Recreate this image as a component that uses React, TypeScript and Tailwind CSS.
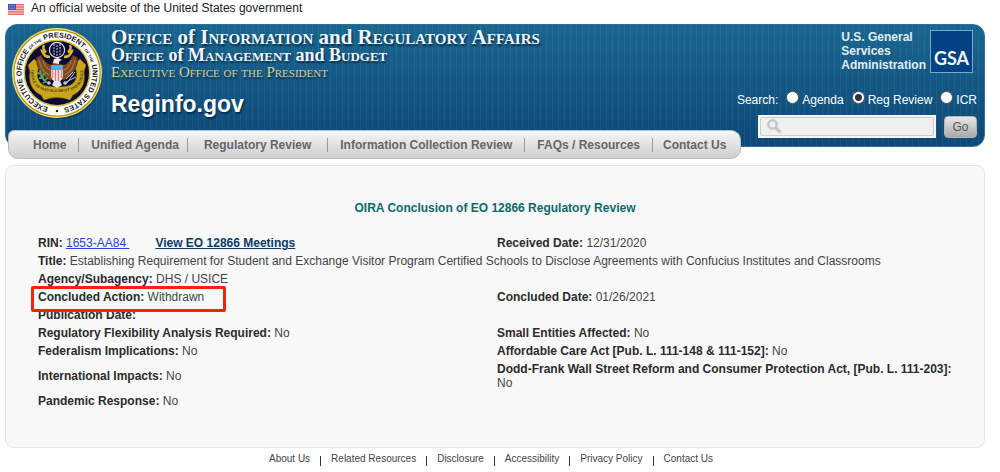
import type { ReactNode } from 'react';

type FieldProps = {
  label: string;
  children?: ReactNode;
};

const NAV_ITEMS = [
  { label: 'Home', className: 'pl-6 pr-3' },
  { label: 'Unified Agenda', className: 'pl-3 pr-2' },
  { label: 'Regulatory Review', className: 'pl-4 pr-4' },
  { label: 'Information Collection Review', className: 'pl-3 pr-3' },
  { label: 'FAQs / Resources', className: 'pl-3 pr-3' },
  { label: 'Contact Us', className: 'pl-2.5 pr-3.5' },
];

const FOOTER_LINKS = [
  'About Us',
  'Related Resources',
  'Disclosure',
  'Accessibility',
  'Privacy Policy',
  'Contact Us',
];

const SCOPES = ['Agenda', 'Reg Review', 'ICR'];

const STRIPES = [0, 2, 4, 6, 8, 10, 12];

function Flag() {
  return (
    <svg width="16" height="11" viewBox="0 0 16 11" aria-hidden="true">
      <rect width="16" height="11" fill="#fbdcd8" />
      {STRIPES.map((n) => (
        <rect key={n} y={(n * 11) / 13} width="16" height="0.9" fill="#e8554d" />
      ))}
      <rect width="8" height="6" fill="#3f5bb8" />
      <path d="M1 1.5h6M1 3h6M1 4.5h6" stroke="#a9b8e8" strokeWidth="0.6" strokeDasharray="0.8 0.8" />
    </svg>
  );
}

function Seal() {
  return (
    <svg width="92" height="92" viewBox="0 0 92 92" className="shrink-0" role="img" aria-label="Executive Office of the President seal">
      <defs>
        <path id="ring" d="M46 81.5a35.5 35.5 0 1 1 0.01 0" />
        <path id="scroll" d="M20 42C19 58 26 65 46 65C66 65 73 58 72 42" />
      </defs>
      <circle cx="47" cy="48" r="44.5" fill="#06294a" opacity="0.5" />
      <circle cx="46" cy="46" r="45" fill="#f4e27c" />
      <circle cx="46" cy="46" r="43.8" fill="#b8920a" />
      <circle cx="46" cy="46" r="42.6" fill="#fff" />
      <circle cx="46" cy="46" r="33.5" fill="#d9bd30" />
      <circle cx="46" cy="46" r="32" fill="#0b0b3b" />
      <text fill="#15151f" fontFamily="Liberation Sans" fontWeight="700" fontSize="7.3">
        <textPath href="#ring" startOffset="4%">
          EXECUTIVE OFFICE <tspan fontSize="4">OF THE</tspan> PRESIDENT <tspan fontSize="4">OF THE</tspan> UNITED STATES
        </textPath>
      </text>
      <circle cx="46" cy="84" r="1.3" fill="#222" />
      {/* ribbon */}
      <path d="M17 38l6-6 7 6-3 5c-2 9 2 15 9 16q10 2 20 0c7-1 11-7 9-16l-3-5 7-6 6 6-2 7c2 13-4 20-11 23l-3 5q-13-5-26 0l-3-5c-7-3-13-10-11-23z" fill="#c9a61c" stroke="#725c08" strokeWidth="0.7" />
      <text fontSize="4" fill="#443806" fontFamily="Liberation Serif" fontWeight="700" textAnchor="middle">
        <textPath href="#scroll" startOffset="50%">OFFICE OF MANAGEMENT AND BUDGET</textPath>
      </text>
      {/* glory */}
      <path d="M33 18q-2 4 2 7l-4-1q2 6 8 6M59 18q2 4-2 7l4-1q-2 6-8 6" fill="none" stroke="#d8b52a" strokeWidth="2.4" />
      <circle cx="46" cy="23" r="7.6" fill="#10103f" stroke="#f0e8c8" strokeWidth="1.1" />
      <g fill="#dedee8">
        {[19, 22, 25, 28].map((y) => (
          <g key={y}>
            <circle cx="43" cy={y - 1} r="0.8" />
            <circle cx="46" cy={y} r="0.8" />
            <circle cx="49" cy={y - 1} r="0.8" />
          </g>
        ))}
      </g>
      {/* eagle */}
      <path d="M41 36q2-4 5-4l4 2-3 2 5 2q6-1 10-10l5 3q-1 15-13 22H38Q26 46 25 31l5-3q4 9 11 10z" fill="#7a4a20" stroke="#3e220d" strokeWidth="0.6" />
      <path d="M28 33q2 11 10 15M32 33q1 7 7 10M64 33q-2 11-10 15M60 33q-1 7-7 10" fill="none" stroke="#b27a3c" strokeWidth="1.2" />
      <path d="M42 36l1-4 4-1 4 2-3 1v3z" fill="#f5f2e8" />
      <path d="M29 43q0 9 8 13M26 46l5 1M28 51l5 0M32 56l3-2M34 46l-3 4M37 51l-4 2" fill="none" stroke="#5da05a" strokeWidth="1.8" />
      <path d="M55 57l9-12M55 55l10-5M55 52l7-7" fill="none" stroke="#c9ccd0" strokeWidth="1" />
      <path d="M40 40h12v9q-1 5-6 7-5-2-6-7z" fill="#fff" />
      <path d="M41.5 43v8M44.5 43v12M47.5 43v12M50.5 43v8" stroke="#ef7076" strokeWidth="1.6" />
      <path d="M40 38h12v5H40z" fill="#48b0e4" />
      <path d="M43 54h6l2 4-5 3-5-3z" fill="#e4e5ed" />
      <circle cx="38" cy="56" r="1.8" fill="#c8cbd6" />
      <circle cx="54" cy="56" r="1.8" fill="#c8cbd6" />
    </svg>
  );
}

function GsaLogo() {
  return (
    <svg width="43" height="43" viewBox="0 0 43 43" className="shrink-0" role="img" aria-label="GSA">
      <rect x="0.5" y="0.5" width="42" height="42" fill="#004282" stroke="#79a9cc" />
      <text x="21.5" y="35" textAnchor="middle" fontSize="18" fontFamily="Lato" fontWeight="700" fill="#f3f7fb">GSA</text>
    </svg>
  );
}

function Small({ children }: { children: ReactNode }) {
  return <span className="[font-variant-caps:normal]">{children}</span>;
}

function Agency() {
  return (
    <div className="pl-2 font-['Liberation_Serif',serif] text-[#f2f6fa] [text-shadow:1px_2px_2px_#06294a]">
      <p className="text-[21px] leading-[20px] font-bold [font-variant-caps:small-caps]">
        Office <Small>of</Small> Information <Small>and</Small> Regulatory Affairs
      </p>
      <p className="text-[18px] leading-[17px] font-bold [font-variant-caps:small-caps]">
        Office <Small>of</Small> Management <Small>and</Small> Budget
      </p>
      <p className="text-[15px] leading-[16px] text-[#dccf96] [font-variant-caps:small-caps]">
        Executive Office of the President
      </p>
      <h1 className="mt-[10px] font-['Liberation_Sans',sans-serif] text-[23px] leading-[28px] font-bold text-white">Reginfo.gov</h1>
    </div>
  );
}

function SearchForm() {
  return (
    <form className="flex flex-col items-end" onSubmit={(e) => e.preventDefault()}>
      <fieldset aria-label="Search scope" className="flex items-center text-[12px] leading-[16px] text-white">
        <span className="mr-2">Search:</span>
        {SCOPES.map((scope) => (
          <label key={scope} className="ml-2 flex items-center gap-[3px] first-of-type:ml-0">
            <input
              type="radio"
              name="scope"
              defaultChecked={scope === 'Reg Review'}
              className="mb-1 size-[13px] appearance-none rounded-full border border-[#555] bg-white checked:bg-[radial-gradient(circle,#333_0_3px,#fff_4px)]"
            />
            {scope}
          </label>
        ))}
      </fieldset>
      <div className="mt-[7px] flex items-center gap-2">
        <label className="flex h-[23px] w-[178px] items-center bg-[#f7f7f7] p-[2px]">
          <span className="flex h-full w-full items-center rounded-[2px] border border-[#ccc] bg-[#f0f0f0] pl-[6px]">
            <svg width="15" height="15" viewBox="0 0 15 15" fill="none" stroke="#c8c8c8" aria-hidden="true">
              <circle cx="5.5" cy="5.5" r="4.2" strokeWidth="2.4" />
              <path d="M8.5 8.5l5 5" strokeWidth="3.2" />
            </svg>
            <input type="text" aria-label="Search terms" className="min-w-0 flex-1 bg-transparent px-1 text-[12px] text-[#333] outline-none" />
          </span>
        </label>
        <button type="submit" className="h-[22px] w-[33px] rounded-[4px] border border-[#b5b5b5] bg-linear-to-b from-[#e8e8e8] to-[#a9a9a9] text-[12px] leading-[16px] text-[#555]">
          Go
        </button>
      </div>
    </form>
  );
}

function Field({ label, children }: FieldProps) {
  return (
    <>
      <b className="text-[#2b2b2b]">{label}</b> {children}
    </>
  );
}

function ReviewTable() {
  return (
    <table className="w-full table-fixed text-left text-[12px] leading-[14px] text-[#444] [&_td]:px-[2px] [&_td]:py-[2px]">
      <tbody>
        <tr>
          <td>
            <Field label="RIN:">
              <a href="#rin" className="whitespace-pre text-[#2443e8] underline">{'1653-AA84 '}</a>
            </Field>
            <a href="#meetings" className="ml-[26px] font-bold text-[#0b3a6b] underline">View EO 12866 Meetings</a>
          </td>
          <td><Field label="Received Date:">12/31/2020</Field></td>
        </tr>
        <tr>
          <td colSpan={2}>
            <Field label="Title:">
              Establishing Requirement for Student and Exchange Visitor Program Certified Schools to Disclose Agreements with Confucius Institutes and Classrooms
            </Field>
          </td>
        </tr>
        <tr>
          <td colSpan={2}><Field label="Agency/Subagency:">DHS / USICE</Field></td>
        </tr>
        <tr>
          <td className="relative">
            <Field label="Concluded Action:">Withdrawn</Field>
            <span className="absolute -top-[2px] -left-[5px] z-10 h-[26px] w-[195px] rounded-[2px] border-3 border-[#f9200f]" />
          </td>
          <td><Field label="Concluded Date:">01/26/2021</Field></td>
        </tr>
        <tr>
          <td colSpan={2}><Field label="Publication Date:" /></td>
        </tr>
        <tr>
          <td><Field label="Regulatory Flexibility Analysis Required:">No</Field></td>
          <td><Field label="Small Entities Affected:">No</Field></td>
        </tr>
        <tr>
          <td><Field label="Federalism Implications:">No</Field></td>
          <td><Field label="Affordable Care Act [Pub. L. 111-148 & 111-152]:">No</Field></td>
        </tr>
        <tr>
          <td><Field label="International Impacts:">No</Field></td>
          <td><Field label="Dodd-Frank Wall Street Reform and Consumer Protection Act, [Pub. L. 111-203]:">No</Field></td>
        </tr>
        <tr>
          <td colSpan={2}><Field label="Pandemic Response:">No</Field></td>
        </tr>
      </tbody>
    </table>
  );
}

export default function App() {
  return (
    <div className="bg-white pr-[15px] pl-[5px] font-['Liberation_Sans',Arial,sans-serif]">
      <div className="flex h-6 items-start gap-[7px] pl-[3px] text-[12px] leading-[17px] text-[#1b1b1b]">
        <span className="pt-1"><Flag /></span>
        An official website of the United States government
      </div>

      <header className="flex h-[123px] justify-between rounded-[12px] border border-[#2d6f98] bg-[repeating-linear-gradient(90deg,#ffffff0d_0_1px,transparent_1px_6px),linear-gradient(#19668f,#0d4878)]">
        <div className="flex pt-[2px] pl-[5px]">
          <Seal />
          <Agency />
        </div>
        <div className="flex flex-col items-end justify-between pt-[5px] pr-[7px] pb-[8px]">
          <div className="flex gap-1 pr-1 text-[12px] leading-[14px] font-bold text-[#e3edf4]">
            <p>
              U.S. General
              <br />
              Services
              <br />
              Administration
            </p>
            <GsaLogo />
          </div>
          <SearchForm />
        </div>
      </header>

      <nav className="relative -mt-[17px] ml-[3px] flex h-[29px] w-fit items-center rounded-[10px] rounded-tl-[6px] border border-[#bdbdbd] bg-linear-to-b from-[#f6f6f6] to-[#cecece] text-[12px] leading-[14px] font-bold text-[#666]">
        {NAV_ITEMS.map((item) => (
          <a key={item.label} href="#nav" className={`border-l border-[#999] first:border-l-0 ${item.className}`}>
            {item.label}
          </a>
        ))}
      </nav>

      <main className="mt-[6px] rounded-[8px] border border-[#e6e6e6] bg-[#f8f8f8] px-[30px] pt-[34px] pb-[37px]">
        <h2 className="mb-[18px] text-center text-[12px] leading-[16px] font-bold text-[#0b6b6b]">
          OIRA Conclusion of EO 12866 Regulatory Review
        </h2>
        <ReviewTable />
      </main>

      <footer className="flex justify-center py-1 pr-2 text-[10px] leading-[14px] text-[#444]">
        {FOOTER_LINKS.map((label) => (
          <a key={label} href="#footer" className="group flex items-end">
            {label}
            <span className="mx-[10px] h-[10px] w-px bg-[#333] group-last:hidden" />
          </a>
        ))}
      </footer>
    </div>
  );
}
